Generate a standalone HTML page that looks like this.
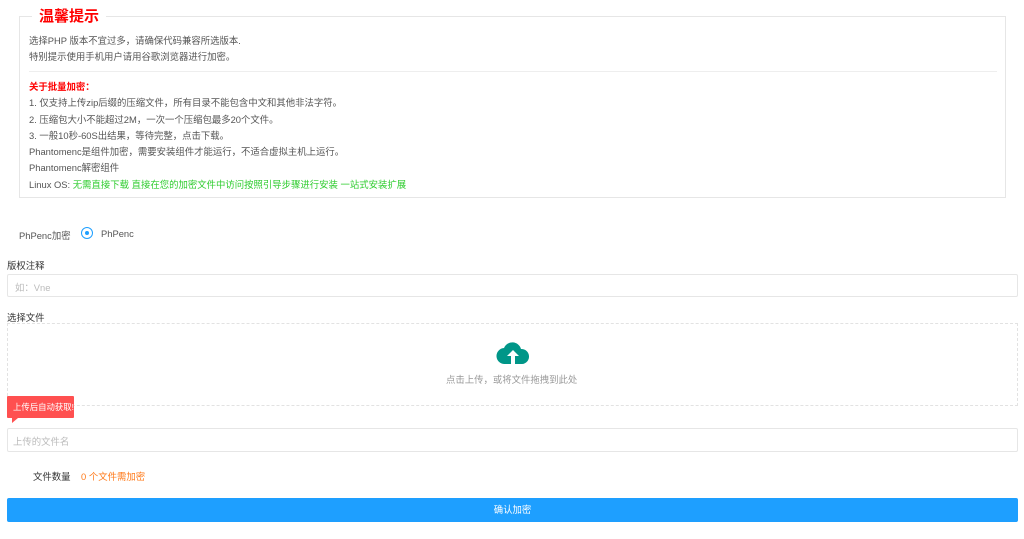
<!DOCTYPE html><html><head><meta charset="utf-8"><style>
body{margin:0;background:#fff;font-family:"Liberation Sans","Noto Sans CJK SC",sans-serif;color:#555;font-size:9.4px;width:1024px;height:539px;overflow:hidden;position:relative}
.a{position:absolute;white-space:nowrap}
.box{position:absolute;left:19px;top:16px;width:987px;height:182px;border:1px solid #e6e6e6;box-sizing:border-box}
.in{position:absolute;left:7px;width:1011px;border:1px solid #e6e6e6;border-radius:2px;box-sizing:border-box;background:#fff}
</style></head><body>
<div class="box"></div>
<div class="a" style="left:32px;top:7px;background:#fff;padding:0 7px;color:#f00;font-size:15px;font-weight:bold;line-height:20px">温馨提示</div>
<div class="a" style="left:29px;top:33px;line-height:16.3px">选择PHP 版本不宜过多，请确保代码兼容所选版本.<br>特别提示使用手机用户请用谷歌浏览器进行加密。</div>
<div class="a" style="left:29px;top:71px;width:968px;height:1px;background:#eee"></div>
<div class="a" style="left:29px;top:79px;line-height:16.3px"><b style="color:#f00">关于批量加密：</b><br>1. 仅支持上传zip后缀的压缩文件，所有目录不能包含中文和其他非法字符。<br>2. 压缩包大小不能超过2M，一次一个压缩包最多20个文件。<br>3. 一般10秒-60S出结果，等待完整，点击下载。<br>Phantomenc是组件加密，需要安装组件才能运行，不适合虚拟主机上运行。<br>Phantomenc解密组件<br>Linux OS: <span style="color:#2ecc2e">无需直接下载 直接在您的加密文件中访问按照引导步骤进行安装 一站式安装扩展</span></div>
<div class="a" style="left:19px;top:228px">PhPenc加密</div>
<div class="a" style="left:81px;top:227px;width:10px;height:10px;border:1px solid #1e9fff;border-radius:50%"></div>
<div class="a" style="left:85px;top:231px;width:4px;height:4px;background:#1e9fff;border-radius:50%"></div>
<div class="a" style="left:101px;top:228px">PhPenc</div>
<div class="a" style="left:7px;top:258px;color:#333">版权注释</div>
<div class="in" style="top:274px;height:23px"></div>
<div class="a" style="left:15px;top:280px;color:#bbb">如：Vne</div>
<div class="a" style="left:7px;top:310px;color:#333">选择文件</div>
<div class="a" style="left:7px;top:323px;width:1011px;height:83px;border:1px dashed #e2e2e2;box-sizing:border-box"></div>
<svg class="a" style="left:496px;top:341px" width="34" height="24" viewBox="0 0 34 24"><path d="M9 23a8 8 0 0 1-1-16 9 9 0 0 1 17 1 7.5 7.5 0 0 1 1 15z" fill="#009688"/><path d="M17 9l-6 6h4v8h4v-8h4z" fill="#fff"/></svg>
<div class="a" style="left:446px;top:372px;color:#999">点击上传，或将文件拖拽到此处</div>
<div class="a" style="left:7px;top:396px;width:67px;height:22px;background:#ff5050;color:#fff;font-size:8.4px;line-height:22px;text-indent:6px;border-radius:1px">上传后自动获取!</div>
<div class="a" style="left:12px;top:418px;border-left:0 solid transparent;border-right:6px solid transparent;border-top:5px solid #ff5050"></div>
<div class="in" style="top:428px;height:24px"></div>
<div class="a" style="left:13px;top:434px;color:#bbb">上传的文件名</div>
<div class="a" style="left:33px;top:469px;color:#333">文件数量</div>
<div class="a" style="left:81px;top:469px;color:#ff7a1a">0 个文件需加密</div>
<div class="a" style="left:7px;top:498px;width:1011px;height:24px;background:#1e9fff;border-radius:2px;color:#fff;text-align:center;line-height:24px">确认加密</div>
</body></html>
